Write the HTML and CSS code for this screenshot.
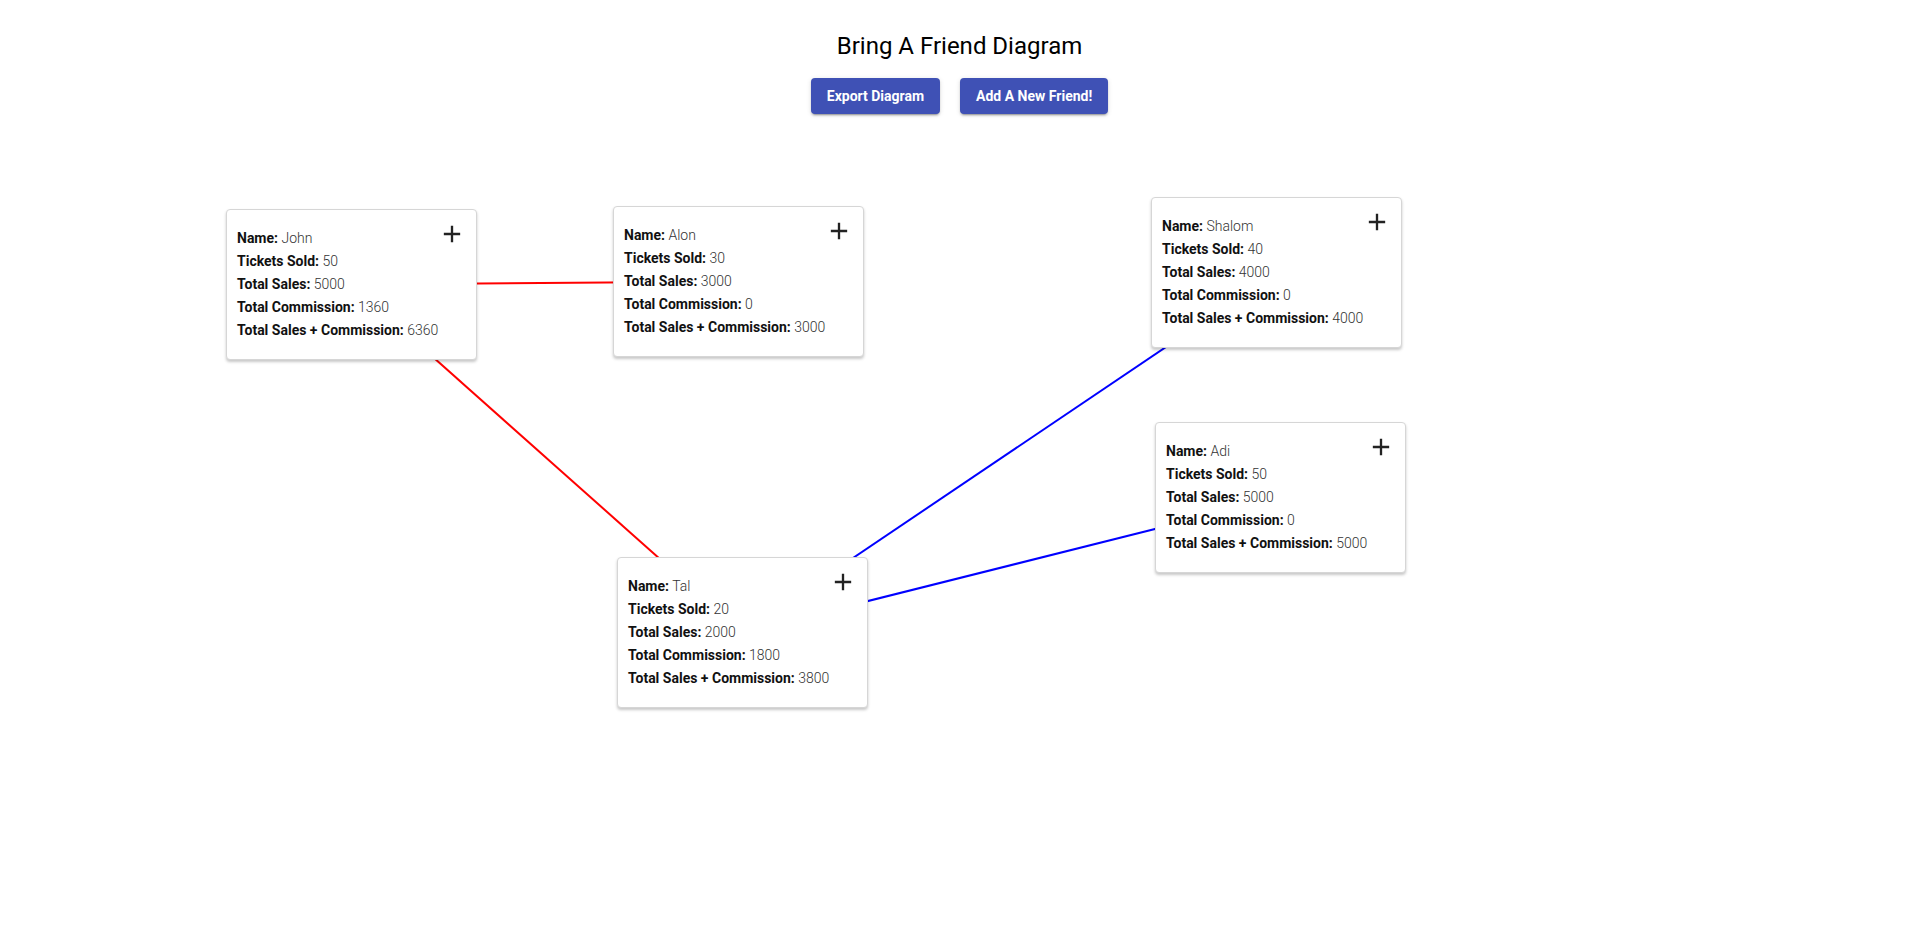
FILE: index.html
```html
<!DOCTYPE html>
<html lang="en">
<head>
<meta charset="utf-8">
<title>Bring A Friend Diagram</title>
<link rel="stylesheet" href="styles.css">
</head>
<body>
<header class="header">
  <h1 class="title">Bring A Friend Diagram</h1>
  <div class="actions">
    <button class="btn">Export Diagram</button>
    <button class="btn">Add A New Friend!</button>
  </div>
</header>
<main class="diagram">
  <svg class="links" width="1919" height="807" viewBox="0 0 1919 807">
    <line x1="351.5" y1="154.5" x2="738.5" y2="151.5" stroke="#ff0000" stroke-width="2"/>
    <line x1="351.5" y1="154.5" x2="742.5" y2="502.5" stroke="#ff0000" stroke-width="2"/>
    <line x1="742.5" y1="502.5" x2="1276.5" y2="142.5" stroke="#0000ff" stroke-width="2"/>
    <line x1="742.5" y1="502.5" x2="1280.5" y2="367.5" stroke="#0000ff" stroke-width="2"/>
  </svg>

  <div class="node" style="left:226px;top:79px">
    <div class="info">
      <div class="row"><b>Name:</b> John</div>
      <div class="row"><b>Tickets Sold:</b> 50</div>
      <div class="row"><b>Total Sales:</b> 5000</div>
      <div class="row"><b>Total Commission:</b> 1360</div>
      <div class="row"><b>Total Sales + Commission:</b> 6360</div>
    </div>
    <svg class="add" viewBox="0 0 24 24"><path d="M19 13h-6v6h-2v-6H5v-2h6V5h2v6h6v2z"/></svg>
  </div>

  <div class="node" style="left:613px;top:76px">
    <div class="info">
      <div class="row"><b>Name:</b> Alon</div>
      <div class="row"><b>Tickets Sold:</b> 30</div>
      <div class="row"><b>Total Sales:</b> 3000</div>
      <div class="row"><b>Total Commission:</b> 0</div>
      <div class="row"><b>Total Sales + Commission:</b> 3000</div>
    </div>
    <svg class="add" viewBox="0 0 24 24"><path d="M19 13h-6v6h-2v-6H5v-2h6V5h2v6h6v2z"/></svg>
  </div>

  <div class="node" style="left:1151px;top:67px">
    <div class="info">
      <div class="row"><b>Name:</b> Shalom</div>
      <div class="row"><b>Tickets Sold:</b> 40</div>
      <div class="row"><b>Total Sales:</b> 4000</div>
      <div class="row"><b>Total Commission:</b> 0</div>
      <div class="row"><b>Total Sales + Commission:</b> 4000</div>
    </div>
    <svg class="add" viewBox="0 0 24 24"><path d="M19 13h-6v6h-2v-6H5v-2h6V5h2v6h6v2z"/></svg>
  </div>

  <div class="node" style="left:1155px;top:292px">
    <div class="info">
      <div class="row"><b>Name:</b> Adi</div>
      <div class="row"><b>Tickets Sold:</b> 50</div>
      <div class="row"><b>Total Sales:</b> 5000</div>
      <div class="row"><b>Total Commission:</b> 0</div>
      <div class="row"><b>Total Sales + Commission:</b> 5000</div>
    </div>
    <svg class="add" viewBox="0 0 24 24"><path d="M19 13h-6v6h-2v-6H5v-2h6V5h2v6h6v2z"/></svg>
  </div>

  <div class="node" style="left:617px;top:427px">
    <div class="info">
      <div class="row"><b>Name:</b> Tal</div>
      <div class="row"><b>Tickets Sold:</b> 20</div>
      <div class="row"><b>Total Sales:</b> 2000</div>
      <div class="row"><b>Total Commission:</b> 1800</div>
      <div class="row"><b>Total Sales + Commission:</b> 3800</div>
    </div>
    <svg class="add" viewBox="0 0 24 24"><path d="M19 13h-6v6h-2v-6H5v-2h6V5h2v6h6v2z"/></svg>
  </div>
</main>
</body>
</html>
```

FILE: styles.css
```css
* { box-sizing: border-box; }

html, body {
  margin: 0;
  padding: 0;
  background: #ffffff;
  font-family: Roboto, "Liberation Sans", Arial, sans-serif;
  color: rgba(0, 0, 0, 0.87);
}

.header {
  display: flex;
  flex-direction: column;
  align-items: center;
  padding-top: 32px;
  gap: 18px;
}

.title {
  margin: 0;
  font-size: 24px;
  line-height: 28px;
  font-weight: 400;
  color: #000;
}

.actions {
  display: flex;
  gap: 20px;
}

.btn {
  height: 36px;
  padding: 0 16px;
  border: none;
  border-radius: 4px;
  background: #3f51b5;
  color: #fff;
  font-family: Roboto, "Liberation Sans", Arial, sans-serif;
  font-size: 14px;
  font-weight: 700;
  cursor: pointer;
  box-shadow: 0 3px 1px -2px rgba(0,0,0,0.2), 0 2px 2px 0 rgba(0,0,0,0.14), 0 1px 5px 0 rgba(0,0,0,0.12);
}

.diagram {
  position: relative;
  margin-top: 16px;
  height: 807px;
}

.links {
  position: absolute;
  left: 0;
  top: 0;
}

.node {
  position: absolute;
  width: 251px;
  display: flex;
  justify-content: space-between;
  align-items: flex-start;
  background: #fff;
  border: 1px solid #d6d6d6;
  border-radius: 4px;
  box-shadow: 0 2px 3px rgba(0,0,0,0.22);
}

.info {
  padding: 17px 0 17px 10px;
  font-size: 14px;
  line-height: 23px;
  color: #333;
  font-weight: 300;
  white-space: nowrap;
}

.info b {
  font-weight: 700;
  color: #111;
}

.add {
  width: 28px;
  height: 28px;
  margin: 10px 10px 0 0;
  fill: #222;
  flex: none;
}
```
